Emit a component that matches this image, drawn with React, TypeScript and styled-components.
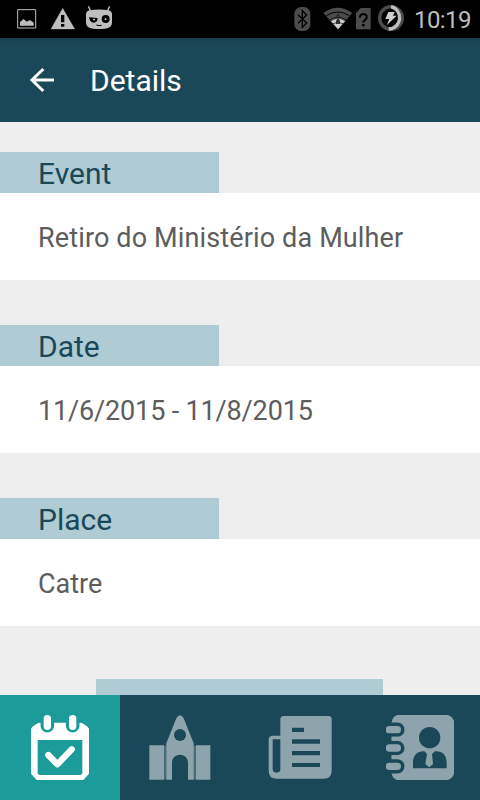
import React from "react";
import styled, { createGlobalStyle } from "styled-components";

const GlobalStyle = createGlobalStyle`
  html, body { margin: 0; padding: 0; }
  body { background: #eeeeee; font-family: Roboto, sans-serif; overflow: hidden; }
`;

const Screen = styled.div`
  display: flex;
  flex-direction: column;
  width: 480px;
  height: 800px;
  overflow: hidden;
  background: #eeeeee;
`;

const StatusBar = styled.header`
  display: flex;
  justify-content: space-between;
  flex: none;
  height: 38px;
  background: #000;
`;

const StatusGroup = styled.div<{ $start?: number; $end?: number }>`
  display: flex;
  align-items: center;
  padding-left: ${(p) => p.$start ?? 0}px;
  padding-right: ${(p) => p.$end ?? 0}px;
`;

const StatusIcon = styled.svg<{ $width: number }>`
  display: block;
  flex: none;
  width: ${(p) => p.$width}px;
  height: 38px;
`;

const Clock = styled.time`
  width: 58px;
  margin-left: -4px;
  color: #bebebe;
  font-size: 24px;
  line-height: 38px;
  letter-spacing: -0.6px;
  white-space: nowrap;
  padding-top: 2px;
`;

const AppBar = styled.div`
  display: flex;
  align-items: center;
  flex: none;
  height: 84px;
  background: linear-gradient(#19404f 0, #1b4859 7px);
`;

const BackButton = styled.button`
  display: block;
  width: 90px;
  height: 84px;
  padding: 0;
  border: 0;
  background: none;

  svg { display: block; }
`;

const Title = styled.h1`
  margin: 0;
  padding-top: 2px;
  color: #fff;
  font-size: 30px;
  font-weight: 400;
  line-height: 82px;
`;

const Content = styled.main`
  display: flex;
  flex-direction: column;
  flex: 1;
  min-height: 0;
  padding-top: 30px;
  overflow: hidden;
`;

const Section = styled.section`
  flex: none;
  margin-bottom: 45px;
`;

const Label = styled.h2`
  box-sizing: border-box;
  width: 219px;
  height: 41px;
  margin: 0;
  padding: 1px 0 0 38px;
  background: #afcbd3;
  color: #1b4859;
  font-size: 30px;
  font-weight: 400;
  line-height: 41px;
`;

const Value = styled.p<{ $tracking: number }>`
  height: 87px;
  margin: 0;
  padding-left: 38px;
  background: #fff;
  color: #5d5d5d;
  font-size: 27px;
  line-height: 91px;
  letter-spacing: ${(p) => p.$tracking}px;
  white-space: nowrap;
`;

const ActionButton = styled.button`
  flex: none;
  align-self: flex-start;
  width: 287px;
  height: 60px;
  margin: 8px 0 0 96px;
  border: 0;
  background: #afcbd3;
`;

const TabBar = styled.nav`
  display: grid;
  grid-template-columns: repeat(4, 120px);
  flex: none;
  height: 105px;
  background: #1b4859;
`;

const Tab = styled.button<{ $active?: boolean }>`
  padding: 0;
  border: 0;
  background: ${(p) => (p.$active ? "#1b9b99" : "#1b4859")};
  color: ${(p) => (p.$active ? "#fff" : "#8da4ac")};

  --tab: ${(p) => (p.$active ? "#1b9b99" : "#1b4859")};
`;

const TabIcon = styled.svg`
  display: block;
  width: 120px;
  height: 105px;
`;

const details = [
  { label: "Event", value: "Retiro do Ministério da Mulher", tracking: 0.14 },
  { label: "Date", value: "11/6/2015 - 11/8/2015", tracking: -0.15 },
  { label: "Place", value: "Catre", tracking: 0 },
];

const CalendarIcon = () => (
  <TabIcon viewBox="0 75 360 315">
    <path fill="currentColor" d="M93 176Q97 169 105 165Q112 158 121 158H239Q248 158 255 165Q263 169 267 176V311L250 330H110L93 311Z" />
    <path fill="var(--tab)" d="M113 210H247V310L242 315H118L113 310Z" />
    <g strokeLinecap="round" fill="none">
      <path stroke="var(--tab)" strokeWidth="41" d="M142 142V167M218 142V167" />
      <path stroke="currentColor" strokeWidth="22" d="M142 146V169M218 146V169" />
      <path stroke="currentColor" strokeWidth="19" strokeLinejoin="round" d="M145 255L172 283L215 238" />
    </g>
  </TabIcon>
);

const ChurchIcon = () => (
  <TabIcon viewBox="0 75 360 315">
    <path fill="currentColor" opacity=".4" d="M131 227H140V328H131ZM219 227H229V328H219Z" />
    <path fill="currentColor" d="M88 226H132V329H88ZM228 226H271V329H228ZM139 329V220L169 145Q180 126 191 145L221 220V329H204V278C204 246 156 246 156 278V329Z" />
    <circle cx="180" cy="195" r="18" fill="var(--tab)" />
  </TabIcon>
);

const NewsIcon = () => (
  <TabIcon viewBox="0 75 360 315">
    <path fill="currentColor" d="M121 148Q121 138 131 138H265Q275 138 275 148V302Q275 326 251 326H110Q86 326 86 302V210Q86 197 99 197H121Z" />
    <path fill="var(--tab)" d="M98 208H121V298Q121 308 110 308Q98 308 98 298ZM156 173H192V186H156ZM156 208H240V221H156ZM156 243H240V256H156ZM156 279H240V291H156Z" />
  </TabIcon>
);

const ContactsIcon = () => (
  <TabIcon viewBox="0 75 360 315">
    <path fill="currentColor" d="M95 156Q97 141 111 135H264Q277 140 282 153V312Q277 325 264 330H111Q98 325 95 312Z" />
    <g fill="none" strokeLinecap="round">
      <path stroke="var(--tab)" strokeWidth="43" d="M85 179H112M85 234H112M85 289H112" />
      <path stroke="currentColor" strokeWidth="22" d="M88 179H112M88 234H112M88 289H112" />
    </g>
    <path fill="currentColor" d="M95 200H112V212H95ZM95 255H112V267H95Z" />
    <path fill="var(--tab)" d="M68 165H78V304H68ZM159 295V279C159 255 173 244 190 244H229C247 244 260 255 260 279V295Z" />
    <circle cx="209" cy="203" r="32" fill="var(--tab)" />
    <path fill="currentColor" d="M192 242H226L216 252L219 282L208 292L196 282L201 252Z" />
  </TabIcon>
);

const tabs = [
  { name: "Events", icon: <CalendarIcon />, active: true },
  { name: "Church", icon: <ChurchIcon /> },
  { name: "News", icon: <NewsIcon /> },
  { name: "Contacts", icon: <ContactsIcon /> },
];

const Notifications = () => (
  <StatusGroup $start={16}>
    <StatusIcon $width={34} viewBox="48 0 102 114">
      <path d="M53 29H107V84H53Z" fill="none" stroke="#bebebe" strokeWidth="3" />
      <path d="M60 77V66L71 57L80 65L90 60L101 68V77Z" fill="#bebebe" />
    </StatusIcon>
    <StatusIcon $width={34} viewBox="150 0 102 114">
      <path d="M188 25L224 87H153Z" fill="#bebebe" stroke="#bebebe" strokeLinejoin="round" />
      <path d="M183 45H193V67H183ZM183 72H193V80H183Z" fill="#000" />
    </StatusIcon>
    <StatusIcon $width={30} viewBox="252 0 90 114">
      <path d="M265 19L271 31M329 19L323 31" stroke="#bebebe" strokeWidth="4" />
      <path d="M258 43Q258 34 268 31Q297 26 326 31Q336 34 336 43V67Q336 84 315 86Q297 88 279 86Q258 84 258 67Z" fill="#bebebe" />
      <path d="M267 52L293 54Q293 68 280 68Q269 66 267 52Z" fill="#000" />
      <circle cx="317" cy="57" r="12" fill="#000" />
      <path d="M279 56h6v5h-6zM314 55h5v5h-5z" fill="#bebebe" />
      <path d="M289 75Q297 78 305 76" fill="none" stroke="#000" strokeWidth="3" />
    </StatusIcon>
  </StatusGroup>
);

const SystemStatus = () => (
  <StatusGroup $end={8}>
    <StatusIcon $width={30} viewBox="36 0 90 114">
      <rect x="43" y="21" width="48" height="72" rx="20" fill="#4c4c4c" />
      <path d="M54 44L80 69L67 82V32L80 45L54 70" fill="none" stroke="#000" strokeWidth="4" />
    </StatusIcon>
    <StatusIcon $width={32} viewBox="126 0 96 114">
      <path d="M130 39Q173 8 217 39L174 88Z" fill="#4c4c4c" />
      <path d="M153 64Q174 50 195 64L174 88Z" fill="#d0d0d0" />
      <path d="M139 47Q174 25 208 47" fill="none" stroke="#000" strokeWidth="3" />
      <path d="M149 60Q174 43 199 60M159 71Q174 62 189 71" fill="none" stroke="#000" strokeWidth="2" />
      <path d="M166 52L174 38L182 52ZM168 62L174 55L180 62V72H168Z" fill="#303030" />
    </StatusIcon>
    <StatusIcon $width={22} viewBox="222 0 66 114">
      <path d="M242 24H272V88H228V39Z" fill="#4c4c4c" />
      <path d="M240 53Q239 43 250 42Q262 43 260 53Q259 57 254 61Q249 65 250 68" fill="none" stroke="#000" strokeWidth="6" />
      <path d="M246 72H254V79H246Z" fill="#000" />
    </StatusIcon>
    <StatusIcon $width={42} viewBox="288 0 126 114">
      <circle cx="333" cy="54" r="34" fill="none" stroke="#4c4c4c" strokeWidth="10" />
      <path d="M333 20A34 34 0 0 1 326 87" fill="none" stroke="#bebebe" strokeWidth="10" />
      <path d="M325 36H344L339 47H350L320 76L328 57H316Z" fill="#d0d0d0" />
    </StatusIcon>
    <Clock>10:19</Clock>
  </StatusGroup>
);

export default function App() {
  return (
    <Screen>
      <GlobalStyle />
      <StatusBar>
        <Notifications />
        <SystemStatus />
      </StatusBar>
      <AppBar>
        <BackButton aria-label="Back">
          <svg width="90" height="84" viewBox="0 114 270 252">
            <path d="M162 240H95M130 207L96 240L130 273" fill="none" stroke="#fff" strokeWidth="9" />
          </svg>
        </BackButton>
        <Title>Details</Title>
      </AppBar>
      <Content>
        {details.map((item) => (
          <Section key={item.label}>
            <Label>{item.label}</Label>
            <Value $tracking={item.tracking}>{item.value}</Value>
          </Section>
        ))}
        <ActionButton aria-label="More" />
      </Content>
      <TabBar>
        {tabs.map((tab) => (
          <Tab key={tab.name} $active={tab.active} aria-label={tab.name}>
            {tab.icon}
          </Tab>
        ))}
      </TabBar>
    </Screen>
  );
}
